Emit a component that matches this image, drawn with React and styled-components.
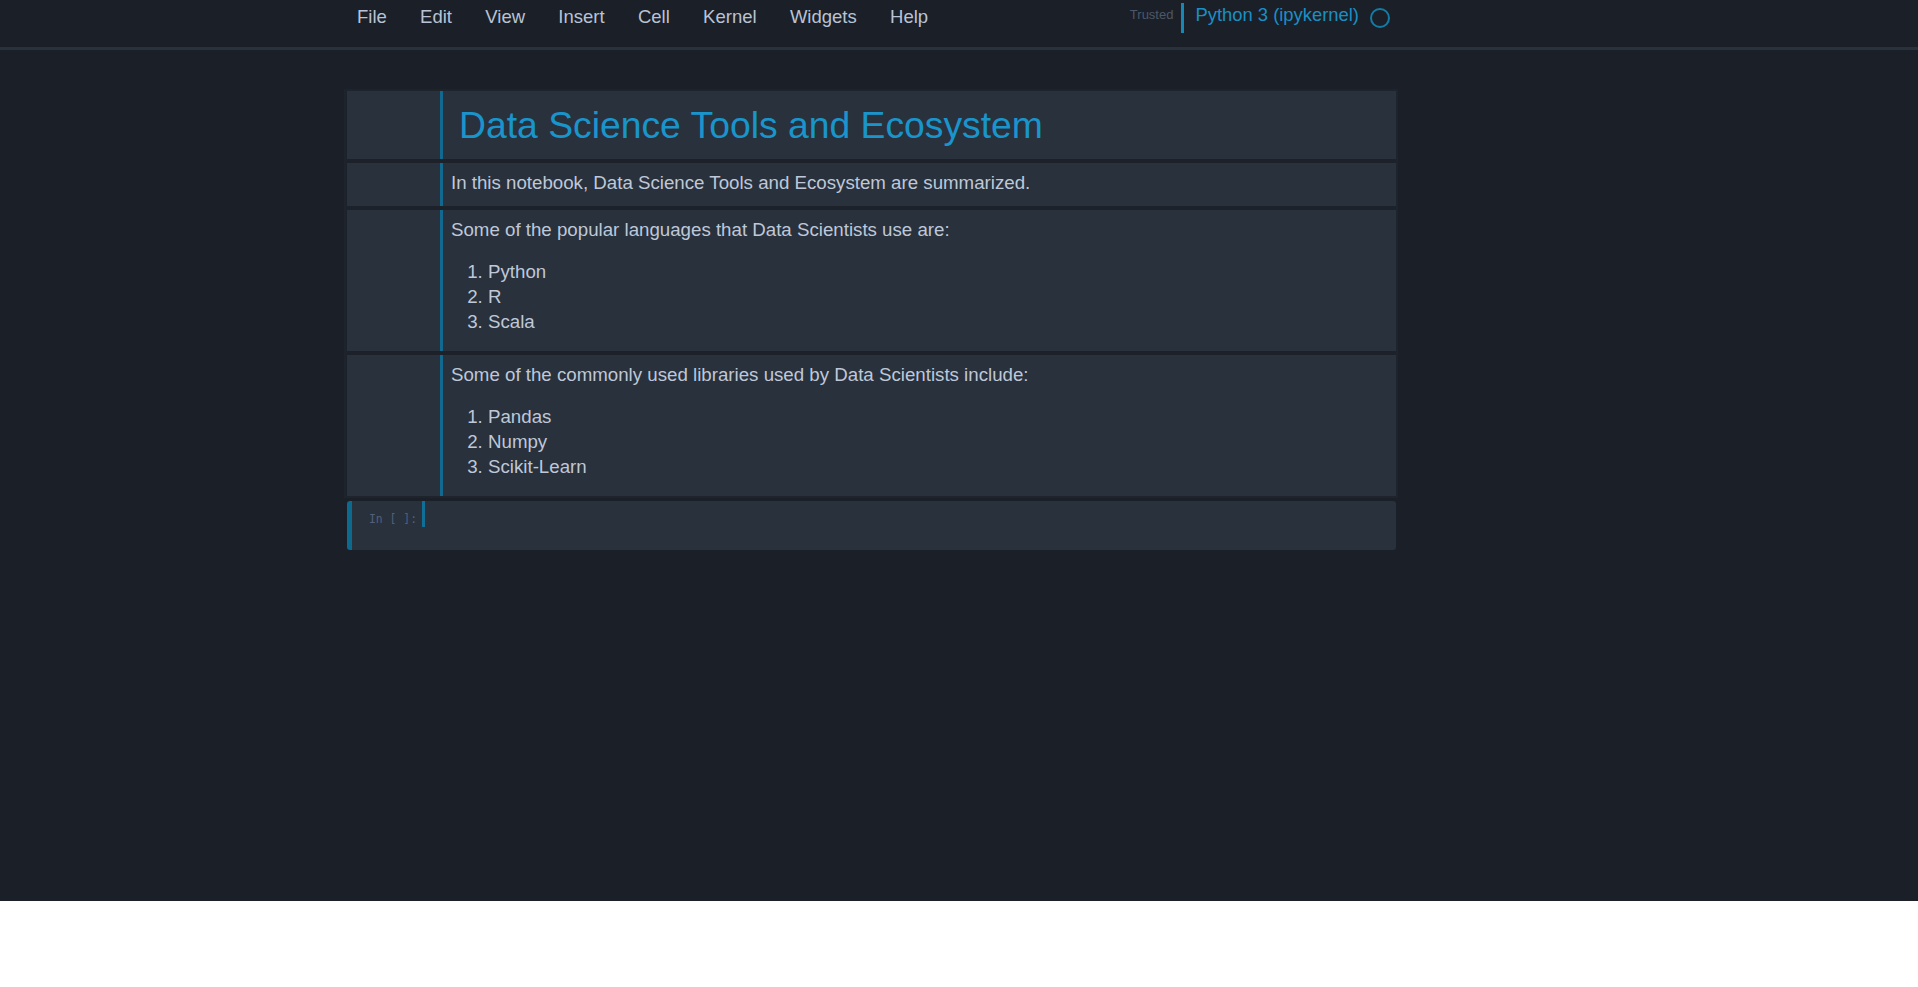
import React from 'react';
import styled, { createGlobalStyle } from 'styled-components';


const GlobalStyle = createGlobalStyle`
  html, body {
    margin: 0;
    padding: 0;
    background: #ffffff;
  }
  body {
    font-family: "Liberation Sans", Arial, sans-serif;
  }
`;

const menuItems = ['File', 'Edit', 'View', 'Insert', 'Cell', 'Kernel', 'Widgets', 'Help'];

const markdownCells = [
  { kind: 'title', text: 'Data Science Tools and Ecosystem' },
  { kind: 'text', text: 'In this notebook, Data Science Tools and Ecosystem are summarized.' },
  {
    kind: 'list',
    text: 'Some of the popular languages that Data Scientists use are:',
    items: ['Python', 'R', 'Scala'],
  },
  {
    kind: 'list',
    text: 'Some of the commonly used libraries used by Data Scientists include:',
    items: ['Pandas', 'Numpy', 'Scikit-Learn'],
  },
];

const App = () => {
  return (
    <Page>
      <GlobalStyle/>
      <Header>
        <HeaderInner>
          <Menu>
            {menuItems.map(item => <MenuItem key={item}>{item}</MenuItem>)}
          </Menu>
          <KernelInfo>
            <Trusted>Trusted</Trusted>
            <KernelName>Python 3 (ipykernel)</KernelName>
            <KernelStatus/>
          </KernelInfo>
        </HeaderInner>
      </Header>

      <Notebook>
        <CellList>
          {markdownCells.map((cell, i) => (
            <Cell key={i}>
              <Prompt/>
              <Rendered>
                {cell.kind === 'title' && <Title>{cell.text}</Title>}
                {cell.kind !== 'title' && <Para>{cell.text}</Para>}
                {cell.items && (
                  <List>
                    {cell.items.map(item => <li key={item}>{item}</li>)}
                  </List>
                )}
              </Rendered>
            </Cell>
          ))}
        </CellList>

        <CodeCell>
          <CodePrompt>In&nbsp;[&nbsp;]:</CodePrompt>
          <InputArea/>
        </CodeCell>
      </Notebook>
    </Page>
  );
};

export default App;

const Page = styled.div`
  height: 901px;
  background-color: #1b2028;
  overflow: hidden;
`;

const Header = styled.div`
  height: 47px;
  border-bottom: 3px solid #29313b;
`;

const HeaderInner = styled.div`
  display: flex;
  justify-content: space-between;
  margin-left: 344px;
  width: 1054px;
  height: 100%;
  padding: 0 8px 0 13px;
  box-sizing: border-box;
`;

const Menu = styled.div`
  display: flex;
  align-items: center;
  gap: 33.3px;
  height: 34px;
`;

const MenuItem = styled.span`
  color: #b9c3d5;
  font-size: 18.5px;
  line-height: 22px;
  cursor: pointer;
`;

const KernelInfo = styled.div`
  display: flex;
  align-items: flex-start;
`;

const Trusted = styled.span`
  color: #4c576a;
  font-size: 13px;
  line-height: 15px;
  margin: 7px 8px 0 0;
`;

const KernelName = styled.span`
  color: #1a8fc6;
  font-size: 18.4px;
  line-height: 24px;
  margin-top: 3px;
  padding: 0 0 6px 11px;
  border-left: 3px solid #1787b5;
`;

const KernelStatus = styled.span`
  width: 16px;
  height: 16px;
  margin: 7.5px 0 0 11px;
  border: 2px solid #137ca6;
  border-radius: 50%;
`;

const Notebook = styled.div`
  margin: 39px 0 0 344px;
  width: 1054px;
`;

const CellList = styled.div`
  display: flex;
  flex-direction: column;
  gap: 4px;
  padding: 0 0 0 1px;
  border: 2px solid #1e242c;
  background-color: #1d222a;
`;

const Cell = styled.div`
  display: flex;
  background-color: #29313d;
`;

const Prompt = styled.div`
  width: 93px;
  flex-shrink: 0;
`;

const Rendered = styled.div`
  flex: 1;
  padding: 7px 0 11px 8px;
  border-left: 3px solid #11698f;
  color: #bfc8d8;
  font-size: 18.7px;
  line-height: 25px;
`;

const Title = styled.h1`
  margin: 5px 0 1px 8px;
  color: #1a95cc;
  font-size: 37.3px;
  font-weight: normal;
  line-height: 44px;
`;

const Para = styled.p`
  margin: 0 0 17px 0;

  &:last-child {
    margin-bottom: 0;
  }
`;

const List = styled.ol`
  margin: 0 0 6px 0;
  padding-left: 37px;
`;

const CodeCell = styled.div`
  display: flex;
  margin-top: 3px;
  margin-left: 3px;
  width: 1049px;
  height: 49px;
  box-sizing: border-box;
  background-color: #29313d;
  border-left: 5px solid #0b6a8e;
  border-radius: 3px;
`;

const CodePrompt = styled.div`
  width: 70px;
  padding: 10px 5px 0 0;
  box-sizing: border-box;
  text-align: right;
  color: #52607c;
  font-family: "DejaVu Sans Mono", monospace;
  font-size: 11.4px;
  line-height: 16px;
`;

const InputArea = styled.div`
  flex: 1;
  height: 26px;
  border-left: 3px solid #0f6f96;
`;
